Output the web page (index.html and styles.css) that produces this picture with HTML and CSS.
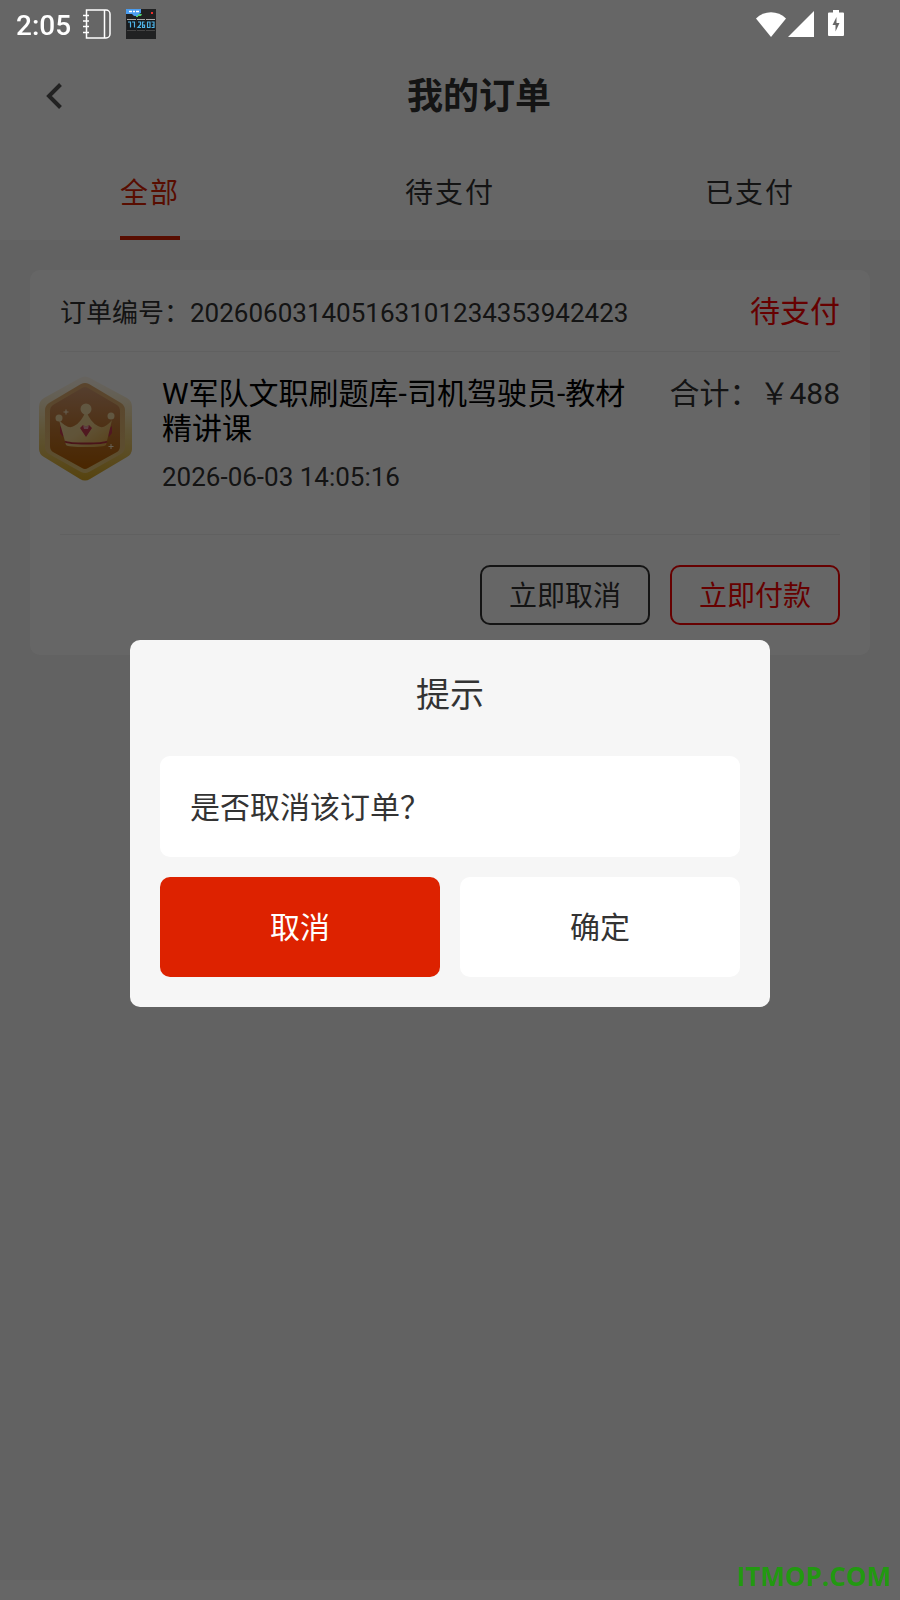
FILE: index.html
```html
<!DOCTYPE html>
<html lang="zh-CN">
<head>
<meta charset="utf-8">
<meta name="viewport" content="width=device-width, initial-scale=1">
<title>我的订单</title>
<link rel="stylesheet" href="styles.css">
</head>
<body>
<div class="status-bar">
  <time class="clock">2:05</time>
  <svg class="icon-notebook" viewBox="0 0 28 30" width="28" height="30" fill="none" stroke="#fff">
    <path d="M3.500 1H23a4 4 0 0 1 4 4V25a4 4 0 0 1-4 4H3.500Z" stroke-width="1.500"/>
    <path d="M21.500 1V29M0 6.500H6M0 12H6M0 17.500H6M0 23.500H6" stroke-width="1.500"/>
  </svg>
  <svg class="icon-widget" viewBox="0 0 30 30" width="30" height="30">
    <rect width="30" height="30" fill="#202122"/>
    <path d="M8 5h8l-1 2h-3v1h-2V6H8z" fill="#4fce6a"/>
    <path d="M0 0h15v4l-2 1-2 2H8L6 5H0z" fill="#4a9df0"/>
    <path d="M3 2.500h3M7 2.500h2M10 2.500h3" stroke="#fff" stroke-width="1.500"/>
    <rect x="25" y="3" width="2" height="2" fill="#f0302c"/>
    <path d="M1 10.500h9M11 10.500h8M20 10.500h9" stroke="#aaa"/>
    <path d="M1 11h9v10H1zM11 11h8v10h-8zM20 11h9v10h-9z" fill="#15191d"/>
    <path d="M2 13h2.500v5.500M6 13h2.500v5.500M12 13h2.500v2.500L12 18.500h3M18.500 13h-2v5.500h2V16h-2M21.500 13h2.500v5.500h-2.500zM25.500 13H28v5.500h-2.500M26 16h2" fill="none" stroke="#4fb4e8" stroke-width="1.200"/>
    <path d="M1 21.500h9M11 21.500h8M20 21.500h9" stroke="#444"/>
  </svg>
  <div class="status-right">
    <svg viewBox="0 0 30 25" width="30" height="25" fill="#fff"><path d="M0 6.500C8-2 22-2 30 6.500L15 25Z"/></svg>
    <svg viewBox="0 0 26 26" width="26" height="26" fill="#fff"><path d="M26 0V26H0Z"/></svg>
    <svg class="icon-battery" viewBox="0 0 16 26" width="16" height="26" fill="#fff" fill-rule="evenodd"><path d="M5 0h6v2.500h4a1 1 0 0 1 1 1V25a1 1 0 0 1-1 1H1a1 1 0 0 1-1-1V3.500a1 1 0 0 1 1-1H5ZM8.500 7L4.500 15H7.500V21.500L11.500 13H8.500Z"/></svg>
  </div>
</div>

<main class="page">
  <header class="nav">
    <button class="back" type="button" aria-label="返回">
      <svg viewBox="0 0 16 26" width="16" height="26" fill="none" stroke="#555" stroke-width="4"><path d="M14.500 1.500L3 13L14.500 24.500"/></svg>
    </button>
    <h1 class="nav-title">我的订单</h1>
  </header>
  <nav class="tabs">
    <a class="tab tab-active" href="#all"><span class="tab-label">全部</span></a>
    <a class="tab" href="#unpaid"><span class="tab-label">待支付</span></a>
    <a class="tab" href="#paid"><span class="tab-label">已支付</span></a>
  </nav>
  <section class="orders">
    <article class="order">
      <div class="order-head">
        <span class="order-no">订单编号：202606031405163101234353942423</span>
        <span class="order-state">待支付</span>
      </div>
      <div class="order-body">
        <svg class="badge" viewBox="0 0 94 106" width="94" height="106" aria-hidden="true">
          <defs>
            <linearGradient id="rim" x1="0" y1="0" x2="0" y2="1"><stop offset="0" stop-color="#fff2dc" stop-opacity=".5"/><stop offset=".5" stop-color="#eed48c"/><stop offset="1" stop-color="#d8a824"/></linearGradient>
            <linearGradient id="ring" x1="0" y1="0" x2="0" y2="1"><stop offset="0" stop-color="#e0aa70"/><stop offset="1" stop-color="#e8c878"/></linearGradient>
            <linearGradient id="core" x1="0" y1="0" x2="0" y2="1"><stop offset="0" stop-color="#d49c74"/><stop offset=".5" stop-color="#c47a34"/><stop offset="1" stop-color="#b86000"/></linearGradient>
            <linearGradient id="crown" x1="0" y1="0" x2="1" y2="1"><stop offset="0" stop-color="#f4dca4"/><stop offset=".5" stop-color="#f0d08c"/><stop offset="1" stop-color="#dca03c"/></linearGradient>
          </defs>
          <path d="M42 2Q47-1 52 2L89 22Q94 25 94 31V73Q94 78 89 81L52 103Q47 106 42 103L6 81Q1 78 1 73V31Q1 25 6 22Z" fill="url(#rim)"/>
          <path d="M43 8Q47 6 51 8L83 27Q87 30 87 34V71Q87 75 83 78L51 96Q47 98 43 96L11 78Q7 75 7 71V34Q7 30 11 27Z" fill="url(#ring)"/>
          <path d="M44 12Q47 10 50 12L79 29Q82 31 82 35V70Q82 74 79 76L50 92Q47 94 44 92L15 76Q12 74 12 70V35Q12 31 15 29Z" fill="url(#core)"/>
          <path d="M22 50l6 5-3 6-3-4zM74 50l-6 5 3 6 3-4z" fill="#c83c50"/>
          <path d="M21 44Q30 54 36 50Q44 46 48 34Q52 46 60 50Q66 54 74 44L68 69Q66 71 48 71Q30 71 28 69Z" fill="url(#crown)"/>
          <g fill="#f2d9a4"><circle cx="48" cy="33" r="5.500"/><circle cx="21" cy="42" r="3.500"/><circle cx="73" cy="40" r="3.500"/></g>
          <path d="M27 65.500Q30 67.500 48 67.500Q66 67.500 69 65.500" fill="none" stroke="#b83440" stroke-width="2"/>
          <path d="M42 52l3-3 3 2 3-2 3 3-6 9z" fill="#c83c50"/>
          <path d="M45 49l3 2 3-2-1 4h-4z" fill="#eca4ac"/>
          <path d="M28 33.500v5M25.500 36h5M73 68v5M70.500 70.500h5" stroke="#fff0d0"/>
        </svg>
        <div class="order-info">
          <h2 class="order-title">W军队文职刷题库-司机驾驶员-教材精讲课</h2>
          <time class="order-time">2026-06-03 14:05:16</time>
        </div>
        <span class="order-total">合计：￥488</span>
      </div>
      <div class="order-actions">
        <button class="action" type="button">立即取消</button>
        <button class="action action-pay" type="button">立即付款</button>
      </div>
    </article>
  </section>
</main>

<div class="scrim">
  <div class="dialog" role="dialog" aria-modal="true" aria-labelledby="dialog-title">
    <h2 class="dialog-title" id="dialog-title">提示</h2>
    <p class="dialog-message">是否取消该订单？</p>
    <div class="dialog-actions">
      <button class="dialog-button dialog-button-primary" type="button">取消</button>
      <button class="dialog-button" type="button">确定</button>
    </div>
  </div>
</div>
<div class="watermark">ITMOP.COM</div>
</body>
</html>
```
FILE: styles.css
```css
* { box-sizing: border-box; }

body {
  margin: 0;
  background: #fff;
  color: #333;
  font-family: Roboto, "Noto Sans CJK SC", sans-serif;
  font-size: 30px;
}

h1, h2, p { margin: 0; }
h2 { font-weight: 400; }

button {
  font: inherit;
  color: inherit;
  padding: 0;
  cursor: pointer;
}

svg { display: block; flex: none; }

.status-bar {
  position: fixed;
  inset: 0 0 auto;
  z-index: 3;
  height: 48px;
  padding: 0 56px 0 16px;
  display: flex;
  align-items: center;
  color: #fff;
}

.clock {
  padding-top: 2px;
  font-size: 28px;
  font-weight: 500;
}

.icon-notebook { margin-left: 12px; }
.icon-widget { margin-left: 15px; }

.status-right {
  margin-left: auto;
  display: flex;
  align-items: center;
  gap: 2px;
}

.icon-battery {
  margin-left: 12px;
  margin-bottom: 2px;
}

.page {
  min-height: 100vh;
  padding-top: 48px;
  display: flex;
  flex-direction: column;
}

.nav {
  height: 96px;
  display: flex;
  align-items: center;
}

.back {
  width: 62px;
  height: 96px;
  border: 0;
  background: none;
  display: flex;
  align-items: center;
  justify-content: flex-end;
}

.nav-title {
  flex: 1;
  padding: 0 4px 6px 0;
  text-align: center;
  font-size: 36px;
  font-weight: 700;
}

.tabs {
  height: 96px;
  display: grid;
  grid-template-columns: repeat(3, 1fr);
  justify-items: center;
  font-size: 28px;
  letter-spacing: 2px;
}

.tab {
  padding-top: 2px;
  display: flex;
  align-items: center;
  color: inherit;
  text-decoration: none;
  border-bottom: 4px solid transparent;
}

.tab-active {
  color: #dd2200;
  border-color: #dd2200;
}

.orders {
  flex: 1;
  margin-bottom: 20px;
  padding: 30px;
  background: #f5f5f5;
}

.order {
  padding: 0 30px 30px;
  border-radius: 10px;
  background: #fff;
}

.order-head {
  height: 82px;
  display: flex;
  align-items: center;
  justify-content: space-between;
  border-bottom: 1px solid #f0f0f0;
}

.order-no { font-size: 26px; }

.order-state {
  padding-bottom: 4px;
  color: #ff0000;
}

.order-body {
  height: 182px;
  margin-left: -22px;
  padding-top: 24px;
  display: flex;
  align-items: flex-start;
}

.order-info {
  flex: 1;
  padding: 0 30px;
}

.order-title {
  color: #000;
  font-size: 30px;
  line-height: 35px;
}

.order-time {
  display: block;
  margin-top: 16px;
  font-size: 26px;
  line-height: 30px;
}

.order-total { line-height: 35px; }

.order-actions {
  padding-top: 30px;
  display: flex;
  justify-content: flex-end;
  gap: 20px;
  border-top: 1px solid #f0f0f0;
}

.action {
  width: 170px;
  height: 60px;
  padding-bottom: 2px;
  border: 2px solid #333;
  border-radius: 10px;
  background: none;
  font-size: 28px;
}

.action-pay {
  border-color: #ff0000;
  color: #ff0000;
}

.scrim {
  position: fixed;
  inset: 0;
  z-index: 2;
  padding-top: 47px;
  display: flex;
  align-items: center;
  justify-content: center;
  background: rgba(0, 0, 0, 0.6);
}

.dialog {
  width: 640px;
  max-width: calc(100% - 60px);
  padding: 30px;
  border-radius: 10px;
  background: #f6f6f6;
}

.dialog-title {
  margin-bottom: 37px;
  padding-top: 1px;
  text-align: center;
  font-size: 34px;
  line-height: 48px;
}

.dialog-message {
  padding: 31px 30px 29px;
  border-radius: 10px;
  background: #fff;
  line-height: 41px;
}

.dialog-actions {
  margin-top: 20px;
  display: grid;
  grid-template-columns: 1fr 1fr;
  gap: 20px;
}

.dialog-button {
  height: 100px;
  padding-bottom: 4px;
  border: 0;
  border-radius: 10px;
  background: #fff;
}

.dialog-button-primary {
  background: #dd2200;
  color: #fff;
}

.watermark {
  position: fixed;
  right: 9px;
  bottom: 7px;
  z-index: 4;
  color: #229911;
  font-family: "Open Sans", sans-serif;
  font-size: 26px;
  font-weight: 700;
  line-height: 34px;
}
```
